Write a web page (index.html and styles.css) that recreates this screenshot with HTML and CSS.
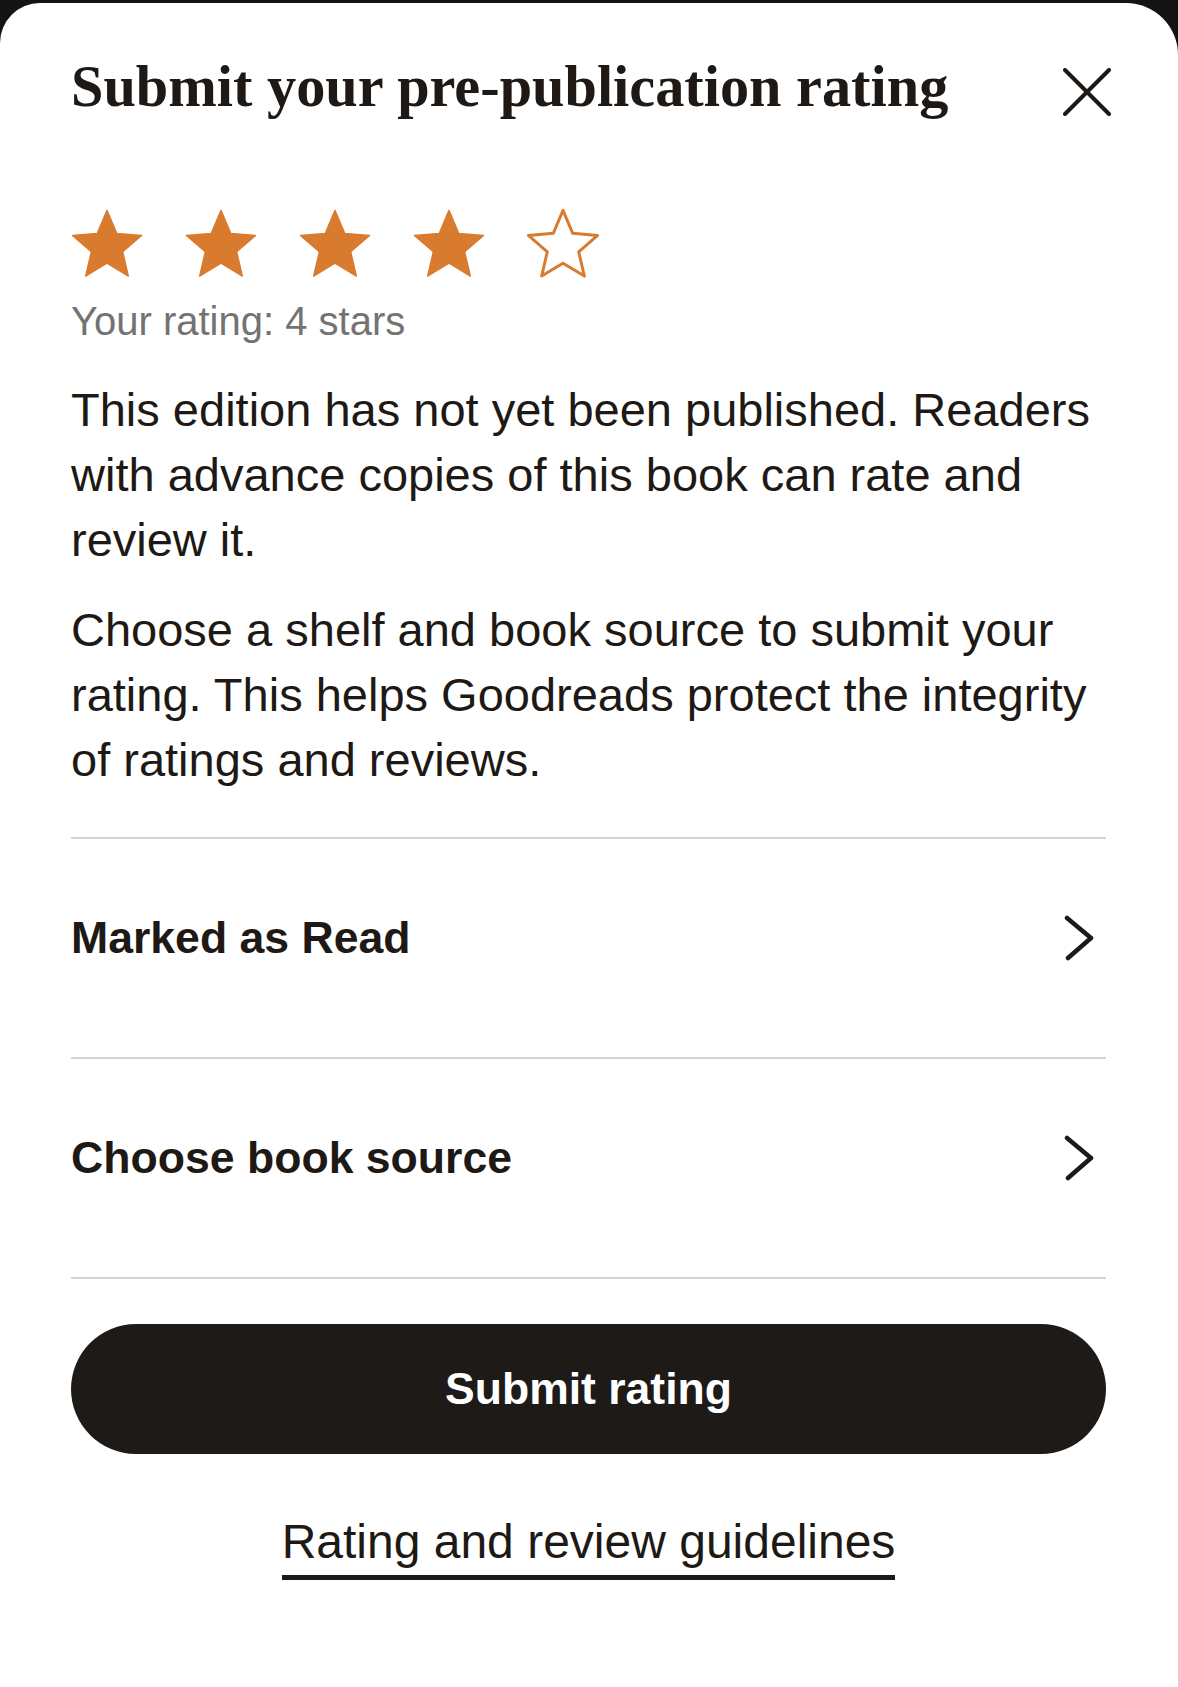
FILE: index.html
```html
<!DOCTYPE html>
<html lang="en">
<head>
<meta charset="utf-8">
<title>Submit your pre-publication rating</title>
<link rel="stylesheet" href="styles.css">
</head>
<body>
<div class="sheet">
  <header class="sheet-head">
    <h1 class="title">Submit your pre-publication rating</h1>
    <button class="close" aria-label="Close">
      <svg width="48" height="48" viewBox="0 0 48 48"><path d="M2 2L46 46M46 2L2 46" stroke="#1e1915" stroke-width="4" stroke-linecap="round" fill="none"/></svg>
    </button>
  </header>

  <div class="stars">
    <svg class="star" viewBox="1.6 1.6 20.8 19.8"><path d="M12 17.27L18.18 21l-1.64-7.03L22 9.24l-7.19-.61L12 2 9.19 8.63 2 9.24l5.46 4.73L5.82 21z" fill="#d97b2f" stroke="#d97b2f" stroke-width="0.4" stroke-linejoin="round"/></svg>
    <svg class="star" viewBox="1.6 1.6 20.8 19.8"><path d="M12 17.27L18.18 21l-1.64-7.03L22 9.24l-7.19-.61L12 2 9.19 8.63 2 9.24l5.46 4.73L5.82 21z" fill="#d97b2f" stroke="#d97b2f" stroke-width="0.4" stroke-linejoin="round"/></svg>
    <svg class="star" viewBox="1.6 1.6 20.8 19.8"><path d="M12 17.27L18.18 21l-1.64-7.03L22 9.24l-7.19-.61L12 2 9.19 8.63 2 9.24l5.46 4.73L5.82 21z" fill="#d97b2f" stroke="#d97b2f" stroke-width="0.4" stroke-linejoin="round"/></svg>
    <svg class="star" viewBox="1.6 1.6 20.8 19.8"><path d="M12 17.27L18.18 21l-1.64-7.03L22 9.24l-7.19-.61L12 2 9.19 8.63 2 9.24l5.46 4.73L5.82 21z" fill="#d97b2f" stroke="#d97b2f" stroke-width="0.4" stroke-linejoin="round"/></svg>
    <svg class="star" viewBox="1.6 1.6 20.8 19.8"><path d="M12 17.27L18.18 21l-1.64-7.03L22 9.24l-7.19-.61L12 2 9.19 8.63 2 9.24l5.46 4.73L5.82 21z" fill="none" stroke="#d97b2f" stroke-width="0.85" stroke-linejoin="round"/></svg>
  </div>
  <p class="rating-label">Your rating: 4 stars</p>

  <p class="body-text">This edition has not yet been published. Readers with advance copies of this book can rate and review it.</p>
  <p class="body-text body-text--second">Choose a shelf and book source to submit your rating. This helps Goodreads protect the integrity of ratings and reviews.</p>

  <ul class="options">
    <li class="option">
      <span class="option-label">Marked as Read</span>
      <svg class="chevron" width="32" height="46" viewBox="0 0 32 46"><path d="M4 3L28 23L5 43" stroke="#1e1915" stroke-width="4.5" stroke-linecap="round" stroke-linejoin="round" fill="none"/></svg>
    </li>
    <li class="option">
      <span class="option-label">Choose book source</span>
      <svg class="chevron" width="32" height="46" viewBox="0 0 32 46"><path d="M4 3L28 23L5 43" stroke="#1e1915" stroke-width="4.5" stroke-linecap="round" stroke-linejoin="round" fill="none"/></svg>
    </li>
  </ul>

  <button class="submit">Submit rating</button>

  <div class="guidelines">
    <a class="guidelines-link" href="#">Rating and review guidelines</a>
  </div>
</div>
</body>
</html>
```

FILE: styles.css
```css
* {
  box-sizing: border-box;
}

html, body {
  margin: 0;
  padding: 0;
  background: #141414;
  height: 100%;
}

body {
  font-family: "Liberation Sans", Arial, sans-serif;
  color: #1e1915;
}

.sheet {
  margin: 3px 0 0 0;
  min-height: 1684px;
  background: #ffffff;
  border-radius: 40px 52px 0 0;
  padding: 49px 72px 0 71px;
}

.sheet-head {
  display: flex;
  justify-content: space-between;
  align-items: flex-start;
}

.title {
  margin: 0;
  font-family: "Liberation Serif", "Times New Roman", serif;
  font-weight: 700;
  font-size: 58.3px;
  line-height: 70px;
  color: #1e1915;
}

.close {
  border: 0;
  background: none;
  padding: 0;
  margin: 16px -5px 0 0;
  width: 48px;
  height: 48px;
  display: block;
  cursor: pointer;
}

.close svg {
  display: block;
}

.stars {
  display: flex;
  gap: 42px;
  margin-top: 87px;
}

.star {
  width: 72px;
  height: 68.5px;
  display: block;
}

.rating-label {
  margin: 19px 0 0;
  font-size: 40px;
  line-height: 48px;
  color: #737373;
}

.body-text {
  margin: 32px 0 0;
  font-size: 47px;
  line-height: 65px;
  color: #1e1915;
}

.body-text--second {
  margin-top: 25px;
}

.options {
  list-style: none;
  margin: 45px 0 0;
  padding: 0;
  border-top: 2px solid #d4d4d4;
}

.option {
  display: flex;
  justify-content: space-between;
  align-items: center;
  padding: 65px 0 85px;
  border-bottom: 2px solid #d4d4d4;
}

.option-label {
  font-weight: 700;
  font-size: 44.6px;
  line-height: 68px;
  color: #1e1915;
}

.chevron {
  display: block;
  margin-right: 11px;
}

.submit {
  display: block;
  width: 100%;
  height: 130px;
  margin-top: 45px;
  border: 0;
  border-radius: 65px;
  background: #1e1a17;
  color: #ffffff;
  font-family: "Liberation Sans", Arial, sans-serif;
  font-weight: 700;
  font-size: 44.5px;
  cursor: pointer;
}

.guidelines {
  text-align: center;
  margin-top: 59px;
}

.guidelines-link {
  display: inline-block;
  font-size: 48px;
  line-height: 58px;
  color: #1e1915;
  text-decoration: none;
  padding-bottom: 4px;
  border-bottom: 5px solid #1e1915;
}
```
